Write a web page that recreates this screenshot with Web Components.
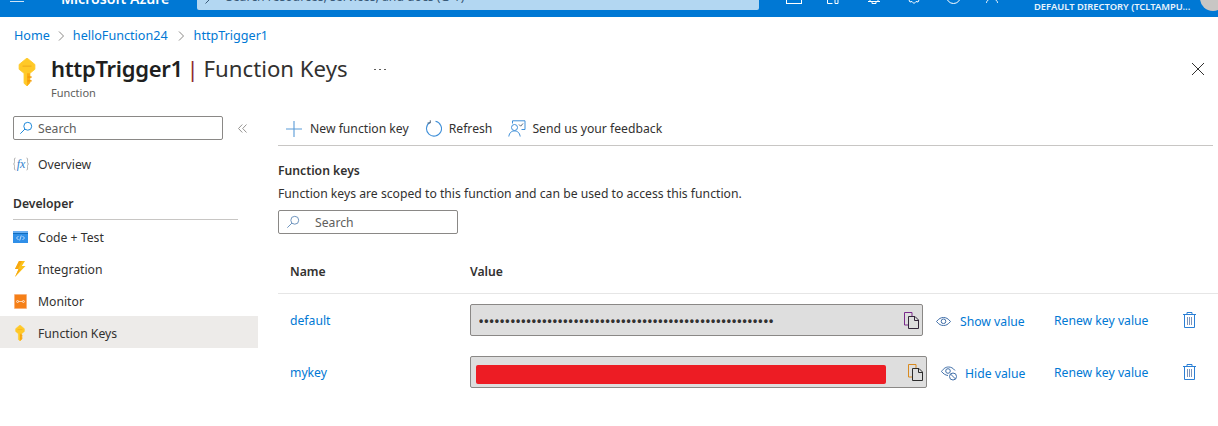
<!DOCTYPE html>
<html>
<head>
<meta charset="utf-8">
<title>Function Keys</title>
<style>
  html, body { margin: 0; padding: 0; background: #fff; }
  body { width: 1218px; height: 426px; overflow: hidden; font-family: "Noto Sans", "Open Sans", sans-serif; font-size: 12.2px; color: #323130; }
</style>
</head>
<body>
<az-topbar></az-topbar>
<az-breadcrumb></az-breadcrumb>
<az-title></az-title>
<az-blade>
  <az-sidemenu slot="side"></az-sidemenu>
  <az-toolbar></az-toolbar>
  <az-keys></az-keys>
</az-blade>

<script>
(function () {
'use strict';

const LINK = '#0078d4';
const font = '"Noto Sans", "Open Sans", sans-serif';

const ICONS = {
    search: '<svg width="16" height="16" viewBox="0 0 16 16" fill="none" stroke="#0078d4" stroke-width="1"><circle cx="10" cy="6" r="4.5"/><path d="M6.8 9.2 1.5 14.5"/></svg>',
    searchGrey: '<svg width="16" height="16" viewBox="0 0 16 16" fill="none" stroke="#5b86b5" stroke-width="1"><circle cx="10" cy="6" r="4.5"/><path d="M6.8 9.2 1.5 14.5"/></svg>',
    key: '<svg width="100%" height="100%" viewBox="0 0 16 26" preserveAspectRatio="none"><path d="M8 0 15 6V10.500L10.600 14.200V23L8 26 5.400 23.500V14.200L1 10.500V6Z" fill="#ffc928" stroke="#ffc928" stroke-width=".8" stroke-linejoin="round"/><path d="M10.600 14.200V23L8 26V14.200Z" fill="#fbab12"/><rect x="4" y="7" width="8" height="1.200" fill="#f2b01e"/><rect x="8.500" y="17" width="3.600" height="1.400" fill="#f39a0a"/><rect x="8.500" y="20.500" width="3.600" height="1.400" fill="#f39a0a"/></svg>',
    fx: '<svg width="16" height="16" viewBox="0 0 16 16" fill="none"><path d="M2.500 2C1 2 1.500 3.500 1.500 5.500S1 8 .5 8c.5 0 1 .5 1 2.500S1 14 2.500 14M13.500 2c1.500 0 1 1.500 1 3.500s.5 2.500 1 2.500c-.5 0-1 .5-1 2.500s.5 3.500-1 3.500" stroke="#a0a0a0" stroke-width=".8"/><text x="8" y="11.500" text-anchor="middle" font-family="Liberation Serif" font-style="italic" font-size="12" fill="#2f80cc">fx</text></svg>',
    code: '<svg width="15" height="12" viewBox="0 0 15 12"><rect width="15" height="12" fill="#2f8fe8"/><rect width="15" height="2" fill="#6db0f2"/><rect x="0" y="2" width="15" height="1" fill="#0f6cbd"/><path d="M5.500 5 3.500 7l2 2M9.500 5l2 2-2 2M8.300 4.500 6.700 9.500" stroke="#dcecff" stroke-width=".8" fill="none"/></svg>',
    bolt: '<svg width="12" height="16" viewBox="0 0 12 16"><path d="M5 0H11L7.800 5H11.500L1 16 4.600 8H1Z" fill="#fcc21a"/><path d="M5 0H8L4 8H1ZM4.600 8 7 8 1 16Z" fill="#f7a712"/></svg>',
    monitor: '<svg width="13" height="15" viewBox="0 0 13 15"><rect width="13" height="15" rx="1" fill="#f9b27a"/><rect x="1" y="1" width="11" height="13" fill="#f57f17"/><path d="M4.600 7.500H8.400" stroke="#ffe3cb" stroke-width=".8"/><circle cx="3.600" cy="7.500" r="1" fill="none" stroke="#fff" stroke-width=".7"/><circle cx="9.400" cy="7.500" r="1" fill="none" stroke="#fff" stroke-width=".7"/></svg>',
    plus: '<svg width="16" height="16" viewBox="0 0 16 16"><path d="M8 0V16M0 8H16" stroke="#5a9bd8" stroke-width="1.100"/></svg>',
    refresh: '<svg width="17" height="17" viewBox="0 0 17 17" fill="none"><path d="M5 2.300A7.500 7.500 0 1 0 10.500 1.300" stroke="#3f8fd8" stroke-width="1.100"/><path d="M5.300 .3V3H2.500" stroke="#5a6a7c" stroke-width="1"/></svg>',
    feedback: '<svg width="18" height="17" viewBox="0 0 18 17" fill="none" stroke-width="1"><circle cx="6.500" cy="7.500" r="3" stroke="#3f8fd8"/><path d="M.8 16.500C1.500 12.500 3.500 11 6.500 11S11.500 12.500 12.200 16.500" stroke="#3f8fd8"/><path d="M4.500 3.500V.8H17V9.500H13.500" stroke="#3f8fd8"/><path d="M11 4.500 12.700 6.200 15 3.500" stroke="#5a6a7c"/></svg>',
    eye: '<svg width="15" height="9" viewBox="0 0 15 9" fill="none" stroke="#3f6ea8"><path d="M.5 4.500C3 1.500 5 .5 7.500.5S12 1.500 14.500 4.500C12 7.500 10 8.500 7.500 8.500S3 7.500 .5 4.500Z"/><circle cx="7.500" cy="4.300" r="2.300"/></svg>',
    eyeOff: '<svg width="16" height="15" viewBox="0 0 16 15" fill="none" stroke="#3f6ea8"><path d="M.5 5.500C3 2 5 1 7.500 1S12 2 14 4.500"/><path d="M.5 5.500C2.500 8 4.500 9.200 7 9.500"/><circle cx="7" cy="5" r="2.300"/><circle cx="12" cy="10.500" r="3.500"/><path d="M9.500 8 14.500 13"/></svg>',
    trash: '<svg width="13" height="16" viewBox="0 0 13 16" fill="none" stroke="#2a7fd5"><path d="M0 2.500H13M4 2.500V.5H9V2.500M1.500 2.500V15.500H11.500V2.500"/><path d="M4.500 5V13M6.500 5V13M8.500 5V13" stroke="#5b78a8" stroke-width=".8"/></svg>',
    copyDark: '<svg width="15" height="17" viewBox="0 0 15 17" fill="none"><path d="M.5 13V.5H8V4M.5 13H4" stroke="#7a2a8c"/><path d="M4.500 4.500H11L14.500 8V16.500H4.500Z" stroke="#33263a"/><path d="M10.500 4.500V8.500H14.500" stroke="#33263a"/></svg>',
    copyLight: '<svg width="15" height="17" viewBox="0 0 15 17" fill="none"><path d="M.5 13V.5H8V4M.5 13H4" stroke="#d98a1f"/><path d="M4.500 4.500H11L14.500 8V16.500H4.500Z" stroke="#2c2c2c"/><path d="M10.500 4.500V8.500H14.500" stroke="#2c2c2c"/></svg>',
    more: '<svg width="12" height="3" viewBox="0 0 12 3" fill="#605e5c"><rect x="0" y="1" width="2" height="1"/><rect x="5" y="1" width="2" height="1"/><rect x="10" y="1" width="2" height="1"/></svg>',
    close: '<svg width="12" height="12" viewBox="0 0 12 12" stroke="#323130" stroke-width="1"><path d="M0 0 12 12M12 0 0 12"/></svg>',
    collapse: '<svg width="9" height="9" viewBox="0 0 9 9" fill="none" stroke="#8a8886" stroke-width=".9"><path d="M4.300.5.500 4.500l3.800 4M8.500.5 4.700 4.500l3.800 4"/></svg>',
    chev: '<svg width="7" height="10" viewBox="0 0 7 10" fill="none" stroke="#8a8886"><path d="M1 .5 5.500 5 1 9.500"/></svg>'
};

const makeTemplate = function (html) {
    let template = document.createElement('template');
    template.innerHTML = html;
    return template;
};

// small base, every element below only hands over its template
class AzElement extends HTMLElement {
    constructor() {
        super();
        let shadowRoot = this.attachShadow({ mode: 'open' });
        shadowRoot.appendChild(document.importNode(this.constructor.template.content, true));
    }
}

class AzTopbar extends AzElement {
    static get template() { return makeTemplate(`<style>
        :host { display: flex; align-items: flex-end; height: 17px; background: #0078d4; overflow: hidden; color: #fff; }
        .burger { width: 14px; height: 5px; margin: 0 37px 15px 10px; border-bottom: 1px solid #cfe4f6; flex: none; }
        .brand { width: 136px; flex: none; font: 600 14.1px/17px ${font}; margin-bottom: 10px; white-space: nowrap; }
        .search { width: 562px; height: 30px; flex: none; margin-bottom: 7px; background: #b3d7f2; border-radius: 0 0 2px 2px; display: flex; align-items: flex-end; box-sizing: border-box; padding-left: 8px; color: #3a5a78; font-size: 12.2px; line-height: 16px; white-space: nowrap; }
        .search span { margin-bottom: 5px; }
        .search svg { flex: none; margin: 0 16px 6px 0; }
        .icons { display: flex; align-items: flex-end; margin-left: 27px; width: 248px; flex: none; margin-bottom: 13px; }
        .icons svg { display: block; flex: none; }
        .icons span { display: block; flex: none; }
        .dir { flex: none; width: 162px; font: 600 9.4px/14px ${font}; margin-bottom: 3px; white-space: nowrap; color: #eaf4fc; }
        .avatar { width: 26px; height: 26px; margin-bottom: 6px; border-radius: 50%; background: #c8c6c4; flex: none; margin-left: 4px; }
      </style>
      <div class="burger"></div>
      <div class="brand">Microsoft Azure</div>
      <div class="search"><svg width="5" height="8" fill="none" stroke="#3a5a78"><path d="M.5.500 4 4 .5 7.500"/></svg><span>Search resources, services, and docs (G+/)</span></div>
      <div class="icons">
        <span style="width:41px"><svg width="16" height="14" fill="none" stroke="#fff"><rect x=".5" y=".5" width="15" height="13"/><path d="M4 5h8"/></svg></span>
        <span style="width:41px"><svg width="14" height="14" fill="none" stroke="#fff"><path d="M.5 .5v13h5M6 .5v8h5v5H8v-5"/></svg></span>
        <span style="width:39px"><svg width="12" height="14" fill="none" stroke="#fff"><path d="M2 .5v11H0h12h-2V.5M4 12v1.500h4V12"/></svg></span>
        <span style="width:39px"><svg width="14" height="14" fill="none" stroke="#fff"><path d="M1 8 3 12 5 11.500 7 13.500 9 11.500 11 12 13 8"/></svg></span>
        <span style="width:40px"><svg width="15" height="14" fill="none" stroke="#fff"><circle cx="7.500" cy="6.500" r="7"/><path d="M7.500 3v6"/></svg></span>
        <span style="width:12px"><svg width="12" height="14" fill="none" stroke="#fff"><path d="M.5 13C.5 11 2 9 6 9s5.500 2 5.500 4"/></svg></span>
      </div>
      <div class="dir">DEFAULT DIRECTORY (TCLTAMPU...</div>
      <div class="avatar"></div>`); }
}

class AzBreadcrumb extends AzElement {
    static get template() { return makeTemplate(`<style>
        :host { display: flex; align-items: center; height: 18px; margin: 10px 0 0 14px; color: ${LINK}; font-size: 12.6px; line-height: 18px; }
        svg { margin: 0 8px; flex: none; }
        svg.last { margin: 0 9px 0 10px; }
      </style>
      <span>Home</span>${ICONS.chev}<span>helloFunction24</span>${ICONS.chev.replace('<svg', '<svg class="last"')}<span>httpTrigger1</span>`); }
}

class AzTitle extends AzElement {
    static get template() { return makeTemplate(`<style>
        :host { display: flex; height: 46px; margin-top: 9px; align-items: flex-start; }
        .key { width: 18px; height: 28px; margin: 4px 15px 0 18px; flex: none; }
        .text { flex: none; }
        h1 { margin: 0; font: 400 22.2px/29px ${font}; color: #323130; white-space: nowrap; }
        b { font-weight: 600; font-size: 22px; color: #201f1e; letter-spacing: -.3px; }
        i { font-style: normal; color: #8e2a2e; font-weight: 400; margin-left: -2px; margin-right: -1px; }
        small { display: block; font-size: 11px; line-height: 15px; color: #605e5c; margin-top: 2px; }
        .more { margin: 6px 0 0 26px; flex: none; }
        .more svg { display: block; margin-top: 8px; }
        .close { margin: 9px 14px 0 auto; flex: none; }
        .close svg { display: block; }
      </style>
      <div class="key">${ICONS.key}</div>
      <div class="text"><h1><b>httpTrigger1</b> <i>|</i> Function Keys</h1><small>Function</small></div>
      <div class="more">${ICONS.more}</div>
      <div class="close">${ICONS.close}</div>`); }
}

class AzBlade extends AzElement {
    static get template() { return makeTemplate(`<style>
        :host { display: grid; grid-template-columns: 258px 1fr; margin-top: 10px; }
        .main { padding: 0 5px 0 20px; min-width: 0; }
      </style>
      <slot name="side"></slot>
      <div class="main"><slot></slot></div>`); }
}

class AzSearch extends HTMLElement {
    constructor() {
        super();
        let wide = this.hasAttribute('wide');
        let shadowRoot = this.attachShadow({ mode: 'open' });
        shadowRoot.innerHTML = `<style>
            :host { display: flex; align-items: center; box-sizing: border-box; height: 24px; border: 1px solid #8a8886; border-radius: 2px; color: #605e5c; font-size: 12.2px; }
            svg { flex: none; margin-left: ${wide ? 7 : 5}px; margin-right: ${wide ? 15 : 5}px; width: 14px; height: 14px; }
          </style>${wide ? ICONS.searchGrey : ICONS.search}<span>Search</span>`;
    }
}

class AzMenuItem extends HTMLElement {
    constructor() {
        super();
        let shadowRoot = this.attachShadow({ mode: 'open' });
        shadowRoot.innerHTML = `<style>
            :host { display: flex; align-items: center; box-sizing: border-box; height: 32px; padding: 2px 0 0 13px; font-size: 12.2px; color: #323130; }
            :host([active]) { background: #edebe9; }
            .ico { width: 25px; flex: none; display: flex; align-items: center; }
            .ico svg { display: block; }
          </style><span class="ico">${this.iconMarkup()}</span><slot></slot>`;
    }
    iconMarkup() {
        let name = this.getAttribute('icon');
        if (name === 'key') return '<span style="display:block;width:10px;height:16px;margin-left:2px">' + ICONS.key + '</span>';
        if (name === 'bolt') return '<span style="display:block;margin-left:1px">' + ICONS.bolt + '</span>';
        if (name === 'monitor') return '<span style="display:block;margin-left:1px">' + ICONS.monitor + '</span>';
        return ICONS[name];
    }
}

class AzSidemenu extends AzElement {
    static get template() { return makeTemplate(`<style>
        :host { display: block; }
        .top { display: flex; align-items: center; padding: 6px 0 0 13px; }
        az-search { width: 210px; }
        .top svg { margin-left: 15px; }
        .over { margin-top: 7px; }
        h3 { margin: 16px 20px 0 13px; padding-bottom: 7px; border-bottom: 1px solid #c8c6c4; font: 600 12.2px/17px ${font}; color: #323130; }
      </style>
      <div class="top"><az-search></az-search>${ICONS.collapse}</div>
      <az-menu-item class="over" icon="fx">Overview</az-menu-item>
      <h3>Developer</h3>
      <div class="list">
        <az-menu-item icon="code">Code + Test</az-menu-item>
        <az-menu-item icon="bolt">Integration</az-menu-item>
        <az-menu-item icon="monitor">Monitor</az-menu-item>
        <az-menu-item icon="key" active>Function Keys</az-menu-item>
      </div>`); }
}

class AzToolbar extends AzElement {
    static get template() { return makeTemplate(`<style>
        :host { display: flex; align-items: center; box-sizing: border-box; height: 36px; border-bottom: 1px solid #c8c6c4; padding: 2px 0 0 8px; font-size: 12.2px; color: #323130; white-space: nowrap; }
        span { display: flex; align-items: center; }
        svg { margin-right: 8px; display: block; }
        .a { margin-right: 16px; }
        .b { margin-right: 16px; }
        .b svg { margin-right: 7px; }
        .c svg { margin-right: 6px; }
      </style>
      <span class="a">${ICONS.plus}New function key</span>
      <span class="b">${ICONS.refresh}Refresh</span>
      <span class="c">${ICONS.feedback}Send us your feedback</span>`); }
}

class AzKeyRow extends HTMLElement {
    constructor() {
        super();
        let shown = this.hasAttribute('shown');
        let shadowRoot = this.attachShadow({ mode: 'open' });
        shadowRoot.innerHTML = `<style>
            :host { display: grid; grid-template-columns: 180px ${shown ? 457 : 453}px ${shown ? 127 : 131}px 129px 20px; align-items: center; height: 32px; color: ${LINK}; font-size: 12.2px; padding-left: 12px; }
            .field { display: flex; align-items: center; box-sizing: border-box; height: 32px; background: #dedede; border: 1px solid #8a8886; border-radius: 2px; padding: 0 3px 0 ${shown ? 5 : 8}px; }
            .val { flex: 1; overflow: hidden; color: #323130; font: 700 12px/14px "Liberation Sans", sans-serif; letter-spacing: 1.07px; white-space: nowrap; margin-top: 2px; }
            .red { flex: none; width: 410px; height: 19px; background: #ed1c24; margin-top: 4px; margin-right: auto; border-radius: 2px; }
            .field svg { display: block; flex: none; }
            .toggle { display: flex; align-items: center; padding-left: ${shown ? 14 : 13}px; margin-top: 2px; }
            .toggle svg { flex: none; margin-right: ${shown ? 8 : 9}px; display: block; }
            .renew { white-space: nowrap; }
            .del svg { display: block; }
          </style>
          <span><slot></slot></span>
          <div class="field">
            ${shown ? '<div class="red"></div>' : '<div class="val">' + '\u2022'.repeat(56) + '</div>'}
            ${shown ? ICONS.copyLight : ICONS.copyDark}
          </div>
          <div class="toggle">${shown ? ICONS.eyeOff : ICONS.eye}<span>${shown ? 'Hide value' : 'Show value'}</span></div>
          <span class="renew">Renew key value</span>
          <div class="del">${ICONS.trash}</div>`;
    }
}

class AzKeys extends AzElement {
    static get template() { return makeTemplate(`<style>
        :host { display: block; }
        h2 { margin: 16px 0 0; font: 600 12.2px/17px ${font}; color: #323130; }
        p { margin: 6px 0 0; font-size: 12.2px; line-height: 17px; color: #323130; white-space: nowrap; }
        az-search { width: 180px; margin-top: 8px; }
        .head { display: grid; grid-template-columns: 180px 1fr; box-sizing: border-box; padding: 29px 0 0 12px; height: 60px; line-height: 18px; border-bottom: 1px solid #e6e6e6; margin-right: -5px; font-weight: 600; font-size: 12.2px; color: #323130; }
        .rows { display: grid; row-gap: 20px; padding-top: 10px; }
      </style>
      <h2>Function keys</h2>
      <p>Function keys are scoped to this function and can be used to access this function.</p>
      <az-search wide></az-search>
      <div class="head"><span>Name</span><span>Value</span></div>
      <div class="rows">
        <az-key-row>default</az-key-row>
        <az-key-row shown>mykey</az-key-row>
      </div>`); }
}

window.customElements.define('az-topbar', AzTopbar);
window.customElements.define('az-breadcrumb', AzBreadcrumb);
window.customElements.define('az-title', AzTitle);
window.customElements.define('az-blade', AzBlade);
window.customElements.define('az-search', AzSearch);
window.customElements.define('az-menu-item', AzMenuItem);
window.customElements.define('az-sidemenu', AzSidemenu);
window.customElements.define('az-toolbar', AzToolbar);
window.customElements.define('az-key-row', AzKeyRow);
window.customElements.define('az-keys', AzKeys);

}());
</script>
</body>
</html>
